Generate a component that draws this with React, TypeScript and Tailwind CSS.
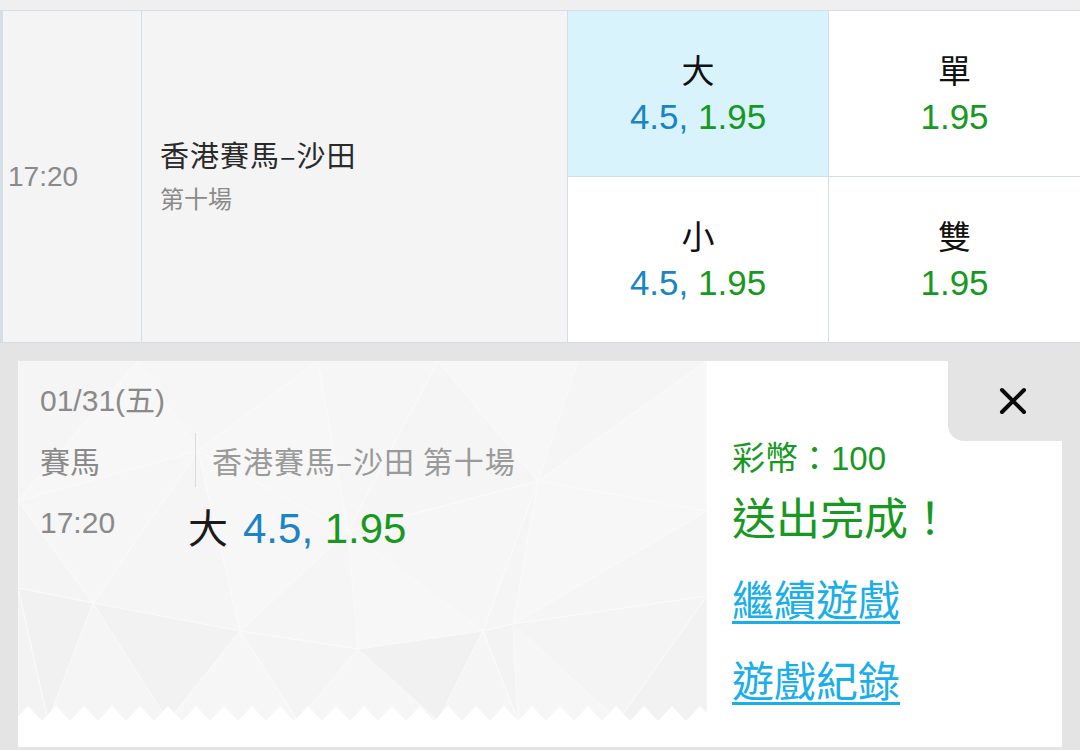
import React from "react";

const FONT = { fontFamily: '"Liberation Sans", "Noto Sans CJK TC", sans-serif' };
const CJK = { fontFamily: '"Noto Sans CJK TC", sans-serif' };

function Pattern() {
  const W = 689;
  const H = 360;
  const pts: string[] = [`0,${H + 2}`, `0,${H}`];
  for (let x = -4; x < W + 28; x += 28) {
    pts.push(`${x},${H}`);
    pts.push(`${x + 14},${H - 15}`);
  }
  pts.push(`${W},${H}`);
  pts.push(`${W},${H + 2}`);
  const tris: [string, string][] = [
    ["0,0 120,0 0,140", "#f5f5f5"],
    ["120,0 180,90 0,140", "#f7f7f7"],
    ["120,0 300,0 180,90", "#f6f6f6"],
    ["300,0 330,170 180,90", "#f7f7f7"],
    ["300,0 420,0 330,170", "#f6f6f6"],
    ["420,0 520,120 330,170", "#f5f5f5"],
    ["420,0 560,0 520,120", "#f7f7f7"],
    ["560,0 689,0 520,120", "#f5f5f5"],
    ["689,0 689,150 520,120", "#f7f7f7"],
    ["0,140 180,90 75,242", "#f6f6f6"],
    ["0,140 75,242 0,227", "#f4f4f4"],
    ["180,90 222,270 75,242", "#f5f5f5"],
    ["180,90 330,170 222,270", "#f7f7f7"],
    ["330,170 340,288 222,270", "#f5f5f5"],
    ["330,170 465,270 340,288", "#f7f7f7"],
    ["330,170 520,120 465,270", "#f6f6f6"],
    ["520,120 495,263 465,270", "#f5f5f5"],
    ["520,120 689,150 495,263", "#f7f7f7"],
    ["689,150 689,235 495,263", "#f5f5f5"],
    ["0,227 75,242 30,360", "#f1f1f1"],
    ["0,227 30,360 0,360", "#f3f3f3"],
    ["75,242 150,360 30,360", "#f5f5f5"],
    ["75,242 222,270 150,360", "#f2f2f2"],
    ["222,270 280,360 150,360", "#f6f6f6"],
    ["222,270 340,288 280,360", "#f4f4f4"],
    ["340,288 420,360 280,360", "#f6f6f6"],
    ["340,288 465,270 420,360", "#f1f1f1"],
    ["465,270 495,263 500,360", "#f3f3f3"],
    ["465,270 500,360 420,360", "#f5f5f5"],
    ["495,263 600,360 500,360", "#f6f6f6"],
    ["495,263 689,235 600,360", "#f4f4f4"],
    ["689,235 689,360 600,360", "#f2f2f2"],
  ];
  return (
    <svg
      className="absolute left-0 top-0"
      width={W}
      height={H + 2}
      viewBox={`0 0 ${W} ${H + 2}`}
    >
      <rect x="0" y="0" width={W} height={H + 2} fill="#f5f5f5" />
      {tris.map(([p, c], i) => (
        <polygon key={i} points={p} fill={c} stroke="#fafafa" strokeWidth="1" />
      ))}
      <polygon points={pts.join(" ")} fill="#ffffff" />
    </svg>
  );
}

function Odds({ line, odds, size }: { line?: string; odds: string; size: string }) {
  return (
    <span className={size}>
      {line && <span className="text-[#1a84c6]">{line}, </span>}
      <span className="text-[#17991f]">{odds}</span>
    </span>
  );
}

function Cell({
  label,
  line,
  odds,
  active,
  className,
}: {
  label: string;
  line?: string;
  odds: string;
  active?: boolean;
  className?: string;
}) {
  return (
    <div
      className={`flex flex-col items-center justify-center pt-[9px] ${
        active ? "bg-[#d8f3fc]" : "bg-white"
      } ${className ?? ""}`}
    >
      <div className="text-[33px] leading-[46px] text-[#111]" style={CJK}>
        {label}
      </div>
      <div className="leading-[50px]">
        <Odds line={line} odds={odds} size="text-[35px]" />
      </div>
    </div>
  );
}

export default function App() {
  return (
    <div
      className="w-[1080px] h-[750px] bg-[#e4e4e4] flex flex-col overflow-hidden"
      style={FONT}
    >
      <div className="h-[11px] bg-[#efefef] border-b border-[#d5dee6]" />
      <div className="flex h-[332px] border-b border-l-[3px] border-[#d5dee6] bg-[#f4f4f4]">
        <div className="w-[139px] flex items-center pl-[5px] border-r border-[#d5dee6]">
          <span className="text-[28px] text-[#8a8a8a]">17:20</span>
        </div>
        <div className="w-[426px] flex flex-col justify-center pl-[18px] pb-[6px] border-r border-[#d5dee6]">
          <div className="text-[29px] leading-[36px] text-[#2a2a2a] tracking-[1px]" style={CJK}>
            香港賽馬–沙田
          </div>
          <div className="text-[24px] leading-[28px] mt-[12px] text-[#8a8a8a]" style={CJK}>
            第十場
          </div>
        </div>
        <div className="flex-1 grid grid-cols-[261px_1fr] grid-rows-2">
          <Cell label="大" line="4.5" odds="1.95" active className="border-r border-b border-[#d5dee6]" />
          <Cell label="單" odds="1.95" className="border-b border-[#d5dee6]" />
          <Cell label="小" line="4.5" odds="1.95" className="border-r border-[#d5dee6]" />
          <Cell label="雙" odds="1.95" />
        </div>
      </div>

      <div className="mt-[18px] ml-[18px] w-[1044px] h-[386px] flex bg-white">
        <div className="relative w-[689px] h-full">
          <Pattern />
          <div className="relative pl-[22px] pt-[20px]">
            <div className="text-[30px] leading-[40px] text-[#8a8a8a]">01/31(五)</div>
            <div className="flex items-center h-[54px] mt-[12px]">
              <div className="w-[155px] text-[30px] text-[#8a8a8a]" style={CJK}>
                賽馬
              </div>
              <div
                className="h-full border-l border-[#dcdcdc] pl-[16px] flex items-center text-[30px] text-[#9a9a9a] tracking-[1px]"
                style={CJK}
              >
                香港賽馬–沙田 第十場
              </div>
            </div>
            <div className="flex items-start mt-[16px]">
              <div className="w-[148px] text-[30px] leading-[40px] text-[#8a8a8a]">17:20</div>
              <div className="leading-[50px] -mt-[2px] flex items-baseline">
                <span className="text-[40px] text-[#1a1a1a]" style={CJK}>
                  大
                </span>
                <span className="ml-[15px]">
                  <Odds line="4.5" odds="1.95" size="text-[42px]" />
                </span>
              </div>
            </div>
          </div>
        </div>
        <div className="relative flex-1 bg-white pl-[25px] pt-[76px]">
          <div className="absolute top-0 right-0 w-[114px] h-[80px] bg-[#e4e4e4] rounded-bl-[16px] flex items-center justify-center pl-[16px]">
            <svg width="28" height="28" viewBox="0 0 28 28">
              <path d="M3 3 L25 25 M25 3 L3 25" stroke="#0a0a0a" strokeWidth="4" strokeLinecap="round" />
            </svg>
          </div>
          <div className="text-[33px] leading-[44px] text-[#17991f]">彩幣：100</div>
          <div className="text-[44px] leading-[56px] mt-[7px] text-[#17991f]" style={CJK}>
            送出完成！
          </div>
          <div
            className="text-[42px] leading-[56px] mt-[26px] text-[#1aaeea] underline underline-offset-[5px] decoration-[3px]"
            style={CJK}
          >
            繼續遊戲
          </div>
          <div
            className="text-[42px] leading-[56px] mt-[25px] text-[#1aaeea] underline underline-offset-[5px] decoration-[3px]"
            style={CJK}
          >
            遊戲紀錄
          </div>
        </div>
      </div>
    </div>
  );
}
